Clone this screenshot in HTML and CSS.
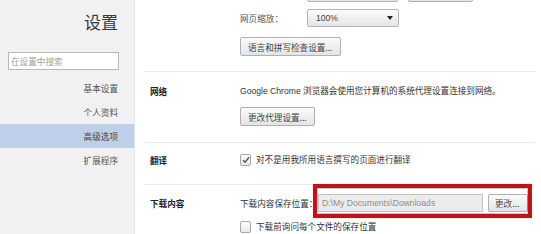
FILE: index.html
```html
<!DOCTYPE html>
<html lang="zh-CN">
<head>
<meta charset="utf-8">
<title>设置</title>
<link rel="stylesheet" href="styles.css">
</head>
<body>
<div class="page">
  <aside class="sidebar">
    <h1 class="title">设置</h1>
    <div class="search">在设置中搜索</div>
    <ul class="nav">
      <li class="nav-item">基本设置</li>
      <li class="nav-item">个人资料</li>
      <li class="nav-item nav-item--active">高级选项</li>
      <li class="nav-item">扩展程序</li>
    </ul>
  </aside>
  <main class="main">
    <section class="section section--first">
      <div class="row row--cut">
        <span class="select select--wide"></span>
        <span class="btn btn--cut"></span>
      </div>
      <div class="row row--zoom">
        <span class="label label--zoom">网页缩放：</span>
        <span class="select"><span class="select-text">100%</span><span class="arrow"></span></span>
      </div>
      <div class="row row--btn">
        <span class="btn">语言和拼写检查设置...</span>
      </div>
    </section>

    <section class="section section--net">
      <h2 class="heading">网络</h2>
      <div class="row text">Google Chrome 浏览器会使用您计算机的系统代理设置连接到网络。</div>
      <div class="row row--btn2">
        <span class="btn">更改代理设置...</span>
      </div>
    </section>

    <section class="section section--translate">
      <h2 class="heading">翻译</h2>
      <div class="row check-row">
        <span class="checkbox"><svg width="8" height="8" viewBox="0 0 8 8"><path d="M1 4.2 L3.1 6.3 L7 1.2" fill="none" stroke="#555" stroke-width="1.4"/></svg></span>
        <span class="text">对不是用我所用语言撰写的页面进行翻译</span>
      </div>
    </section>

    <section class="section section--download">
      <h2 class="heading">下载内容</h2>
      <div class="row row--path">
        <span class="label label--path">下载内容保存位置：</span>
        <span class="path-input">D:\My Documents\Downloads</span>
        <span class="btn btn--change">更改...</span>
        <span class="highlight"></span>
      </div>
      <div class="row check-row check-row--ask">
        <span class="checkbox"></span>
        <span class="text">下载前询问每个文件的保存位置</span>
      </div>
    </section>
  </main>
</div>
</body>
</html>
```

FILE: styles.css
```css
* { box-sizing: border-box; }

html, body {
  margin: 0;
  padding: 0;
  background: #ffffff;
}

body {
  font-family: "Liberation Sans", "Noto Sans CJK SC", sans-serif;
  font-size: 8.6px;
  color: #333333;
  overflow: hidden;
}

.page {
  display: flex;
  width: 541px;
  height: 234px;
  overflow: hidden;
}

/* Sidebar */
.sidebar {
  width: 135px;
  flex: none;
  background: #f1f1f1;
  border-right: 1px solid #e2e2e2;
  padding-top: 12px;
}

.title {
  margin: 0;
  padding-right: 16px;
  text-align: right;
  font-family: "Noto Sans CJK SC", sans-serif;
  font-weight: normal;
  font-size: 17px;
  line-height: 20px;
  color: #3a3a3a;
}

.search {
  margin: 20px 0 0 8px;
  width: 111px;
  height: 18px;
  border: 1px solid #b9b9b9;
  background: #ffffff;
  color: #a0a0a0;
  font-family: "Noto Sans CJK SC", sans-serif;
  line-height: 16px;
  padding-left: 2px;
}

.nav {
  list-style: none;
  margin: 6px 0 0 0;
  padding: 0;
}

.nav-item {
  height: 24px;
  line-height: 24px;
  text-align: right;
  padding-right: 16px;
  color: #555555;
  font-family: "Noto Sans CJK SC", sans-serif;
}

.nav-item--active {
  background: #bfcfe9;
  color: #444444;
}

/* Main */
.main {
  flex: 1;
  padding: 0 6px 0 10px;
}

.section {
  display: grid;
  grid-template-columns: 90px 1fr;
  align-items: center;
  padding-left: 5px;
  border-top: 1px solid #e8e8e8;
}

.section > .row { grid-column: 2; }

.section--first {
  border-top: none;
  margin-top: -16px;
  padding-bottom: 15px;
}

.section--net { padding-top: 12px; padding-bottom: 16px; }
.section--translate { padding-top: 10px; padding-bottom: 17px; }
.section--download { padding-top: 9px; }

.heading {
  grid-column: 1;
  grid-row: 1;
  margin: 0;
  font-size: 8.6px;
  font-weight: bold;
  color: #222222;
  line-height: 14px;
  font-family: "Noto Sans CJK SC", sans-serif;
}

.row {
  display: flex;
  align-items: center;
}

.text {
  line-height: 14px;
  color: #333333;
}

.row--cut { height: 18px; gap: 10px; padding-left: 67px; }
.row--zoom { margin-top: 7px; }
.row--btn { margin-top: 10px; }
.row--btn2 { margin-top: 9px; }

.label {
  color: #555555;
  font-family: "Noto Sans CJK SC", sans-serif;
}

.label--zoom { width: 67px; }
.label--path { width: 78px; color: #333333; }

.select {
  position: relative;
  width: 92px;
  height: 18px;
  border: 1px solid #b4b4b4;
  border-radius: 2px;
  background: linear-gradient(#fbfbfb, #e6e6e6);
  display: flex;
  align-items: center;
  padding-left: 8px;
  color: #444444;
}

.select--wide { width: 91px; }

.arrow {
  margin-left: auto;
  margin-right: 5px;
  width: 0;
  height: 0;
  border-left: 3px solid transparent;
  border-right: 3px solid transparent;
  border-top: 4px solid #222222;
}

.btn {
  display: inline-flex;
  align-items: center;
  height: 19px;
  padding: 0 7px;
  border: 1px solid #b0b0b0;
  border-radius: 2px;
  background: linear-gradient(#fbfbfb, #e4e4e4);
  color: #444444;
  font-family: "Noto Sans CJK SC", sans-serif;
  white-space: nowrap;
}

.btn--cut { width: 65px; height: 18px; }

.check-row { gap: 5px; }
.check-row--ask { margin-top: 8px; }

.checkbox {
  width: 11px;
  height: 12px;
  border: 1px solid #a8a8a8;
  border-radius: 2px;
  background: linear-gradient(#fdfdfd, #e9e9e9);
  display: flex;
  align-items: center;
  justify-content: center;
  flex: none;
}

.row--path {
  position: relative;
  height: 18px;
}

.path-input {
  width: 165px;
  height: 18px;
  border: 1px solid #c4c4c4;
  background: #ececec;
  color: #8c8c8c;
  padding-left: 3px;
  line-height: 16px;
}

.btn--change {
  margin-left: 5px;
  width: 40px;
  height: 18px;
  padding: 0 0 0 6px;
}

.highlight {
  position: absolute;
  left: 73px;
  top: -10px;
  width: 219px;
  height: 34px;
  border: 4px solid #c0121a;
  box-shadow: inset 0 0 0 1px rgba(0, 0, 0, 0.22), 0 0 1px rgba(0, 0, 0, 0.3);
  pointer-events: none;
}
```
